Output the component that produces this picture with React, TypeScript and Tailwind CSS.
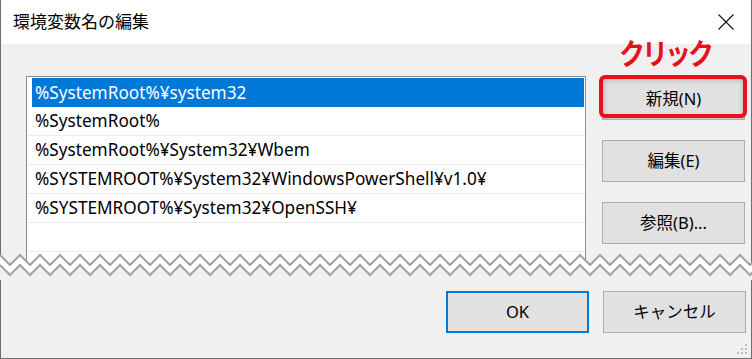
import React from "react";

const ITEMS = [
  "%SystemRoot%¥system32",
  "%SystemRoot%",
  "%SystemRoot%¥System32¥Wbem",
  "%SYSTEMROOT%¥System32¥WindowsPowerShell¥v1.0¥",
  "%SYSTEMROOT%¥System32¥OpenSSH¥",
  "",
];

const FONT = { fontFamily: '"Noto Sans", "Noto Sans CJK JP", sans-serif' };

function TornEdge(): React.ReactElement {
  // two parallel zigzag lines, white between, dialog grey below
  const upper: string[] = [];
  const lower: string[] = [];
  for (let x = 0; x <= 760; x += 10) {
    const up = (x / 10) % 2 === 0 ? 3 : 13;
    upper.push(`${x},${up}`);
    lower.push(`${x},${up + 10}`);
  }
  const whiteFill = [...upper, ...[...lower].reverse()].join(" ");
  const greyFill = [...lower, "760,30", "0,30"].join(" ");
  return (
    <svg width="752" height="28" viewBox="0 0 752 28" className="relative -mt-[16px] block">
      <polygon points={whiteFill} fill="#ffffff" />
      <polygon points={greyFill} fill="#f0f0f0" />
      <polyline points={upper.join(" ")} fill="none" stroke="#a3a3a3" strokeWidth="2" />
      <polyline points={lower.join(" ")} fill="none" stroke="#a3a3a3" strokeWidth="2" />
    </svg>
  );
}

function DialogButton({
  label,
  primary,
  className,
}: {
  label: string;
  primary?: boolean;
  className?: string;
}): React.ReactElement {
  return (
    <button
      type="button"
      className={[
        "h-[42px] w-[143px] bg-[#e1e1e1] text-[16.5px] text-black",
        primary ? "border-2 border-[#0078d7]" : "border border-[#adadad]",
        className ?? "",
      ].join(" ")}
    >
      {label}
    </button>
  );
}

export default function App(): React.ReactElement {
  return (
    <div className="relative flex h-[359px] w-[752px] flex-col overflow-hidden bg-white" style={FONT}>
      <div className="flex h-[44px] items-center justify-between border-x border-[#6f6f6f] bg-white pl-[12px] pr-[17px]">
        <span className="text-[17px] text-black">環境変数名の編集</span>
        <svg width="16" height="16" viewBox="0 0 16 16">
          <path d="M0.5 0.5 L15.5 15.5 M15.5 0.5 L0.5 15.5" stroke="#111" strokeWidth="1.1" />
        </svg>
      </div>

      <div className="flex h-[224px] border-x border-[#6f6f6f] bg-[#f0f0f0] pl-[25px] pt-[32px]">
        <div className="h-[192px] w-[560px] shrink-0 overflow-hidden border border-[#8c8c8c] bg-white pt-px">
          {ITEMS.map((item, i) => (
            <div key={i} className={["h-[29px]", i === 0 ? "" : "border-b border-[#ececec]"].join(" ")}>
              <div
                className={[
                  "ml-[5px] mr-px flex h-full items-center pl-[3px] text-[17.2px] leading-none",
                  i === 0 ? "bg-[#0078d7] text-white" : "text-black",
                ].join(" ")}
              >
                {item}
              </div>
            </div>
          ))}
        </div>

        <div className="relative ml-[16px] flex flex-col gap-[20px] pt-[2px]">
          <DialogButton label="新規(N)" className="shadow-[inset_0_0_6px_rgba(0,0,0,0.25)]" />
          <div className="pointer-events-none absolute left-[-3px] top-[-1px] h-[43px] w-[148px] rounded-[6px] border-[4px] border-[#e8101a]" />
          <DialogButton label="編集(E)" />
          <DialogButton label="参照(B)..." />
        </div>
      </div>

      <TornEdge />

      <div className="relative flex flex-1 justify-end gap-[14px] border-x border-b border-[#6f6f6f] bg-[#f0f0f0] pr-[5px] pt-[11px]">
        <DialogButton label="OK" primary />
        <DialogButton label="キャンセル" />
        <svg width="12" height="12" viewBox="0 0 12 12" className="absolute bottom-[2px] right-[2px]">
          <rect x="8" y="0" width="2" height="2" fill="#bdbdbd" />
          <rect x="4" y="4" width="2" height="2" fill="#bdbdbd" />
          <rect x="8" y="4" width="2" height="2" fill="#bdbdbd" />
          <rect x="0" y="8" width="2" height="2" fill="#bdbdbd" />
          <rect x="4" y="8" width="2" height="2" fill="#bdbdbd" />
          <rect x="8" y="8" width="2" height="2" fill="#bdbdbd" />
        </svg>
      </div>

      <span className="absolute left-[619px] top-[39px] origin-top scale-y-[1.12] whitespace-nowrap text-[26px] font-bold leading-none tracking-[-3px] text-[#e8101a]">
        クリック
      </span>
    </div>
  );
}
